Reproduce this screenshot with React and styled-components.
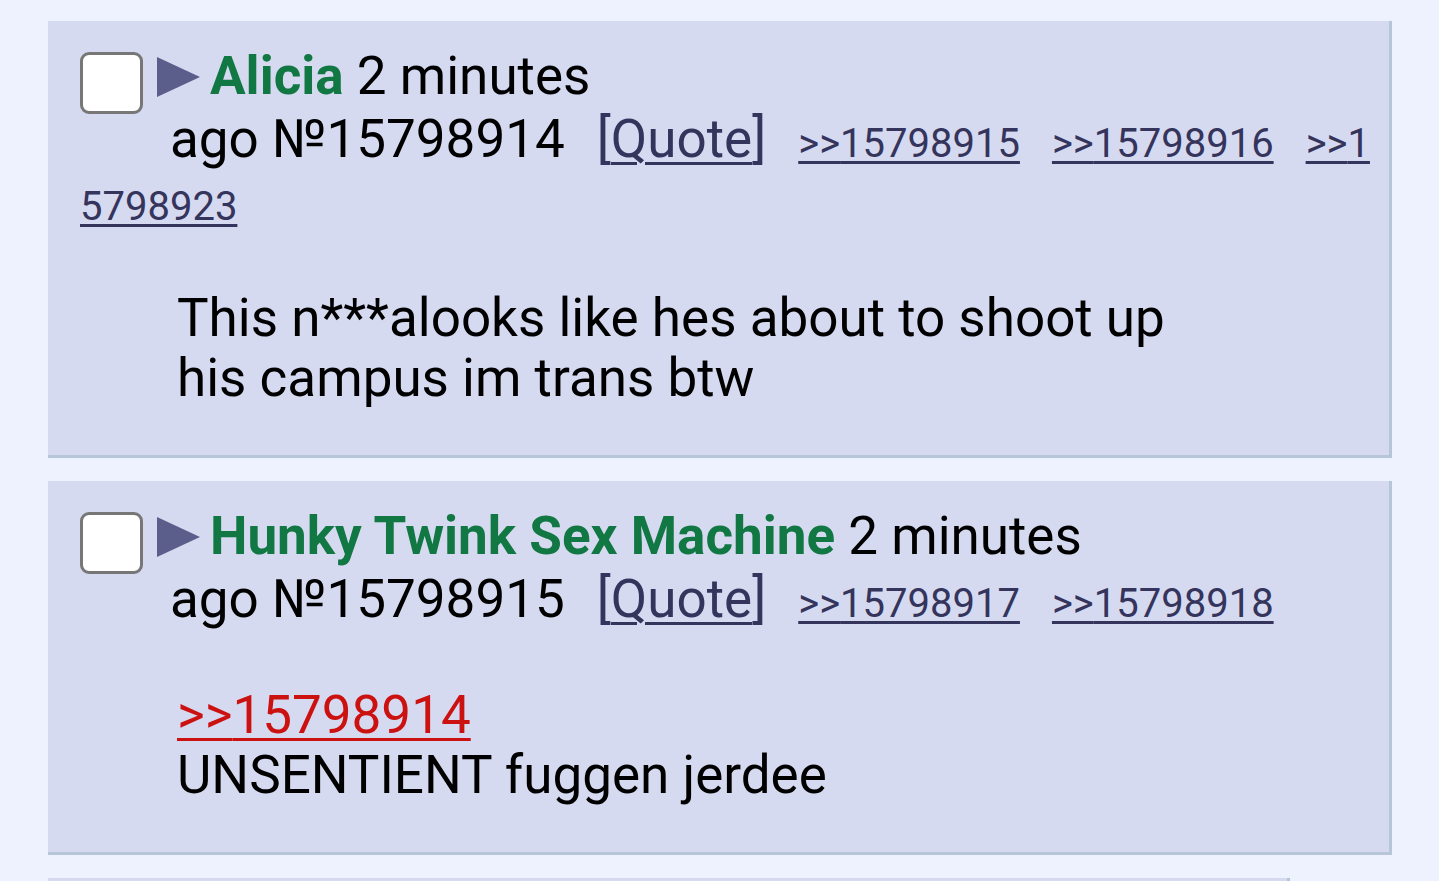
import React from 'react'
import styled, { createGlobalStyle } from 'styled-components'

const GlobalStyle = createGlobalStyle`
  html, body {
    margin: 0;
    padding: 0;
    background: #EEF2FF;
  }
  body {
    font-family: Roboto, 'Noto Sans', 'Liberation Sans', sans-serif;
    color: #000000;
  }
`;

const Thread = styled.div`
  padding: 21px 0 0 48px;
  width: 1344px;
`;

const Post = styled.div`
  box-sizing: border-box;
  width: 100%;
  max-width: ${p => p.$maxWidth || 'none'};
  background: #D6DAF0;
  border-right: 3px solid #B7C5D9;
  border-bottom: 3px solid #B7C5D9;
  padding: 24px 9px 47px 32px;
  margin-bottom: 23px;
`;

const Header = styled.div`
  font-size: 53px;
  line-height: 63px;
`;

const CheckSlot = styled.span`
  float: left;
  width: 63px;
  height: 62px;
  margin: 7px 27px 30px 0;
  box-sizing: border-box;
  background: #FFFFFF;
  border: 3px solid #777777;
  border-radius: 9px;
`;

const Toggle = styled.svg`
  display: inline-block;
  width: 43px;
  height: 40px;
  margin: 0 10px 0 -13px;
  vertical-align: -3px;
`;

const Name = styled.span`
  color: #117743;
  font-weight: 700;
`;

const PostNo = styled.span`
  margin-right: 32px;
`;

const QuoteLink = styled.span`
  color: #34345C;

  a {
    color: inherit;
    text-decoration: underline;
    text-decoration-thickness: 3px;
    text-underline-offset: 5px;
  }
`;

const Backlink = styled.a`
  margin-left: 32px;
  color: #34345C;
  font-size: 40px;
  line-height: 40px;
  text-decoration: underline;
  text-decoration-thickness: 3px;
  text-underline-offset: 4px;
  word-break: break-all;
`;

const Message = styled.div`
  clear: both;
  margin: 54px 0 0 97px;
  max-width: 1030px;
  font-size: 53px;
  line-height: 60px;
`;

const InlineQuote = styled.a`
  color: #CC1111;
  text-decoration: underline;
  text-decoration-thickness: 3px;
  text-underline-offset: 5px;
`;

const posts = [
  {
    name: 'Alicia',
    no: '15798914',
    backlinks: ['15798915', '15798916', '15798923'],
    quote: null,
    text: 'This n***alooks like hes about to shoot up his campus im trans btw',
  },
  {
    name: 'Hunky Twink Sex Machine',
    no: '15798915',
    backlinks: ['15798917', '15798918'],
    quote: '15798914',
    text: 'UNSENTIENT fuggen jerdee',
  },
  {
    name: 'Anonymous',
    no: '15798916',
    backlinks: [],
    quote: '15798914',
    text: '',
    maxWidth: '1242px',
  },
];

const ToggleIcon = () => (
  <Toggle viewBox="0 0 43 40">
    <polygon points="0,0 43,20 0,40" fill="#5B5D8B" />
  </Toggle>
);

const PostItem = ({ post }) => (
  <Post $maxWidth={post.maxWidth}>
    <Header>
      <CheckSlot />
      <ToggleIcon />
      <Name>{post.name}</Name> 2 minutes
      <br />
      <PostNo>ago №{post.no}</PostNo>
      <QuoteLink>[<a href="#q">Quote</a>]</QuoteLink>
      {post.backlinks.map(b => (
        <Backlink key={b} href={`#p${b}`}>&gt;&gt;{b}</Backlink>
      ))}
    </Header>
    <Message>
      {post.quote && (
        <>
          <InlineQuote href={`#p${post.quote}`}>&gt;&gt;{post.quote}</InlineQuote>
          <br />
        </>
      )}
      {post.text}
    </Message>
  </Post>
);

export default function App() {
  return (
    <>
      <GlobalStyle />
      <Thread>
        {posts.map(p => (
          <PostItem key={p.no} post={p} />
        ))}
      </Thread>
    </>
  );
}
